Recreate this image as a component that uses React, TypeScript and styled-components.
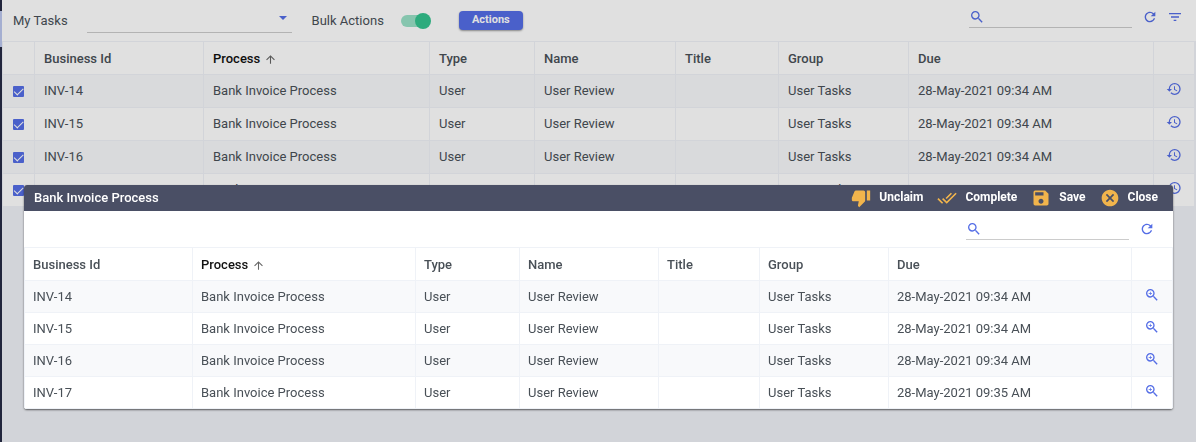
import React from 'react';
import styled, { createGlobalStyle } from 'styled-components';
import {
  MdArrowUpward,
  MdCancel,
  MdDoneAll,
  MdFilterList,
  MdHistory,
  MdRefresh,
  MdSave,
  MdSearch,
  MdThumbDown,
  MdZoomIn,
} from 'react-icons/md';

const color = {
  primary: '#556ee6',
  success: '#34c38f',
  warning: '#f1b44c',
  text: '#495057',
  line: '#eff2f7',
  stripe: '#f8f9fb',
  underline: '#cccccc',
  header: '#4a4f65',
};

const GlobalStyle = createGlobalStyle`
  * { box-sizing: border-box; }
  body {
    margin: 0;
    background: ${color.line};
    color: ${color.text};
    font-family: Roboto, "Liberation Sans", sans-serif;
    font-size: 13px;
    line-height: 16px;
  }
  button, input, select { font: inherit; color: inherit; }
`;

const Page = styled.div`
  display: flex;
  min-height: 100vh;
`;

const SideStrip = styled.div`
  flex: 0 0 2px;
  padding-top: 11px;
  background: #262b45;
`;

const ActiveMark = styled.div`
  height: 36px;
  background: #bcc8ee;
`;

const Main = styled.main`
  flex: 1;
  min-width: 0;
`;

const Toolbar = styled.div`
  display: flex;
  align-items: center;
  height: 41px;
  padding: 0 13px 0 11px;
  background: #fff;
`;

const FieldLabel = styled.label`
  flex: none;
`;

const SelectBox = styled.div`
  position: relative;
  align-self: flex-start;
  width: 205px;
  height: 24px;
  margin: 9px 20px 0 19px;
  border-bottom: 1px solid ${color.underline};
`;

const Select = styled.select`
  width: 100%;
  height: 23px;
  border: 0;
  background: none;
  appearance: none;
  outline: none;
`;

const Caret = styled.span`
  position: absolute;
  top: 7px;
  right: 5px;
  border: 4px solid transparent;
  border-top: 4px solid ${color.primary};
  border-bottom: 0;
  pointer-events: none;
`;

const Switch = styled.input`
  appearance: none;
  position: relative;
  width: 28px;
  height: 12px;
  margin: 0 30px 0 17px;
  border-radius: 6px;
  background: #99e1c7;

  &::after {
    content: '';
    position: absolute;
    top: -2px;
    right: -2px;
    width: 16px;
    height: 16px;
    border-radius: 50%;
    background: ${color.success};
  }
`;

const PrimaryButton = styled.button`
  width: 64px;
  height: 19px;
  padding: 0 0 2px;
  border: 0;
  border-radius: 4px;
  background: ${color.primary};
  box-shadow: 0 1px 2px rgba(0, 0, 0, 0.4);
  color: #fff;
  font-size: 11px;
  font-weight: 700;
  line-height: 16px;
`;

const Tools = styled.div`
  display: flex;
  align-items: flex-start;
  height: 24px;
  margin-left: auto;
`;

const SearchBox = styled.label`
  display: flex;
  width: 163px;
  height: 19px;
  margin-right: 10px;
  border-bottom: 1px solid ${color.underline};
  color: ${color.primary};
`;

const SearchInput = styled.input`
  flex: 1;
  min-width: 0;
  height: 16px;
  padding: 0 4px;
  border: 0;
  outline: none;
  background: none;
`;

const IconButton = styled.button<{ $gap?: number }>`
  display: inline-flex;
  margin: 0 0 0 ${(p) => p.$gap ?? 0}px;
  padding: 0;
  border: 0;
  background: none;
  color: ${color.primary};
`;

const TableWrap = styled.div<{ $inset?: boolean }>`
  margin-right: ${(p) => (p.$inset ? 1 : 0)}px;
`;

const Table = styled.table<{ $row: number; $pad: number }>`
  width: 100%;
  table-layout: fixed;
  border-collapse: separate;
  border-spacing: 0;
  border-top: 1px solid ${color.line};
  border-left: 1px solid ${color.line};
  background: #fff;

  th, td {
    height: ${(p) => p.$row}px;
    padding: 0 0 0 ${(p) => p.$pad}px;
    border-right: 1px solid ${color.line};
    border-bottom: 1px solid ${color.line};
    text-align: left;
    white-space: nowrap;
    overflow: hidden;
  }
  th {
    height: 33px;
    padding-top: 2px;
    font-weight: 500;
  }
  tbody tr:nth-child(odd) { background: ${color.stripe}; }
`;

const Col = styled.col<{ $w?: number }>`
  width: ${(p) => (p.$w ? `${p.$w}px` : 'auto')};
`;

const SortHead = styled.span`
  display: inline-flex;
  align-items: center;
  gap: 4px;
  color: #111;

  svg { color: #666; }
`;

const CheckBox = styled.input`
  appearance: none;
  display: block;
  width: 11px;
  height: 11px;
  margin: 0 0 0 1px;
  border-radius: 1px;
  background: ${color.primary};

  &::after {
    content: '';
    display: block;
    width: 8px;
    height: 4px;
    margin: 3px 2px;
    border: solid #fff;
    border-width: 0 0 1px 1px;
    transform: rotate(-45deg);
    transform-origin: 3px 3px;
  }
`;

const ActionCell = styled.td`
  && { padding: 0 0 4px; text-align: center; }
  button { vertical-align: middle; }
`;

const Backdrop = styled.div`
  position: fixed;
  inset: 0;
  background: rgba(0, 0, 0, 0.12);
`;

const Dialog = styled.section`
  position: absolute;
  top: 185px;
  left: 24px;
  right: 23px;
  overflow: hidden;
  border-radius: 3px;
  background: #fff;
  box-shadow: 0 1px 2px rgba(0, 0, 0, 0.6);
`;

const DialogHeader = styled.header`
  display: flex;
  align-items: center;
  height: 26px;
  padding: 0 15px 0 10px;
  background: ${color.header};
  color: #fff;
`;

const DialogTitle = styled.h2`
  margin: 0 auto 0 0;
  font-size: 13px;
  font-weight: 500;
`;

const DialogActions = styled.div`
  display: flex;
  gap: 14px;
`;

const DialogAction = styled.button`
  display: flex;
  align-items: center;
  gap: 8px;
  padding: 0;
  border: 0;
  background: none;

  svg { color: ${color.warning}; }
`;

const ActionLabel = styled.span`
  padding-bottom: 2px;
  font-size: 12px;
  font-weight: 700;
  line-height: 16px;
`;

const DialogTools = styled.div`
  display: flex;
  justify-content: flex-end;
  align-items: flex-start;
  height: 36px;
  padding: 10px 18px 0;
`;

type Task = { id: string; due: string };

const tasks: Task[] = [
  { id: 'INV-14', due: '28-May-2021 09:34 AM' },
  { id: 'INV-15', due: '28-May-2021 09:34 AM' },
  { id: 'INV-16', due: '28-May-2021 09:34 AM' },
  { id: 'INV-17', due: '28-May-2021 09:35 AM' },
];

const dialogActions = [
  { label: 'Unclaim', Icon: MdThumbDown },
  { label: 'Complete', Icon: MdDoneAll },
  { label: 'Save', Icon: MdSave },
  { label: 'Close', Icon: MdCancel },
];

function Search({ label }: { label: string }) {
  return (
    <SearchBox>
      <MdSearch size={16} />
      <SearchInput type="text" aria-label={label} />
    </SearchBox>
  );
}

type TaskTableProps = {
  widths: (number | undefined)[];
  row: number;
  pad: number;
  selectable?: boolean;
};

function TaskTable({ widths, row, pad, selectable }: TaskTableProps) {
  return (
    <Table $row={row} $pad={pad}>
      <colgroup>
        {widths.map((w, i) => (
          <Col key={i} $w={w} />
        ))}
      </colgroup>
      <thead>
        <tr>
          {selectable && <th />}
          <th>Business Id</th>
          <th>
            <SortHead>
              Process <MdArrowUpward size={13} />
            </SortHead>
          </th>
          <th>Type</th>
          <th>Name</th>
          <th>Title</th>
          <th>Group</th>
          <th>Due</th>
          <th />
        </tr>
      </thead>
      <tbody>
        {tasks.map((t) => (
          <tr key={t.id}>
            {selectable && (
              <td>
                <CheckBox type="checkbox" defaultChecked aria-label={t.id} />
              </td>
            )}
            <td>{t.id}</td>
            <td>Bank Invoice Process</td>
            <td>User</td>
            <td>User Review</td>
            <td />
            <td>User Tasks</td>
            <td>{t.due}</td>
            <ActionCell>
              <IconButton aria-label={selectable ? 'History' : 'View'}>
                {selectable ? <MdHistory size={16} /> : <MdZoomIn size={16} />}
              </IconButton>
            </ActionCell>
          </tr>
        ))}
      </tbody>
    </Table>
  );
}

export default function App() {
  return (
    <>
      <GlobalStyle />
      <Page>
        <SideStrip>
          <ActiveMark />
        </SideStrip>
        <Main>
          <Toolbar>
            <FieldLabel htmlFor="view">My Tasks</FieldLabel>
            <SelectBox>
              <Select id="view" defaultValue="">
                <option value="" />
              </Select>
              <Caret />
            </SelectBox>
            <FieldLabel htmlFor="bulk">Bulk Actions</FieldLabel>
            <Switch id="bulk" type="checkbox" role="switch" defaultChecked />
            <PrimaryButton>Actions</PrimaryButton>
            <Tools>
              <Search label="Search tasks" />
              <IconButton aria-label="Refresh">
                <MdRefresh size={16} />
              </IconButton>
              <IconButton aria-label="Filter" $gap={9}>
                <MdFilterList size={16} />
              </IconButton>
            </Tools>
          </Toolbar>
          <TableWrap $inset>
            <TaskTable
              selectable
              row={33}
              pad={9}
              widths={[32, 169, 226, 105, 141, 103, 130, undefined, 41]}
            />
          </TableWrap>
        </Main>
      </Page>
      <Backdrop />
      <Dialog role="dialog" aria-labelledby="dialog-title">
        <DialogHeader>
          <DialogTitle id="dialog-title">Bank Invoice Process</DialogTitle>
          <DialogActions>
            {dialogActions.map(({ label, Icon }) => (
              <DialogAction key={label}>
                <Icon size={20} />
                <ActionLabel>{label}</ActionLabel>
              </DialogAction>
            ))}
          </DialogActions>
        </DialogHeader>
        <DialogTools>
          <Search label="Search selected tasks" />
          <IconButton aria-label="Refresh selected tasks">
            <MdRefresh size={16} />
          </IconButton>
        </DialogTools>
        <TableWrap>
          <TaskTable row={32} pad={8} widths={[168, 223, 104, 139, 101, 129, undefined, 41]} />
        </TableWrap>
      </Dialog>
    </>
  );
}
